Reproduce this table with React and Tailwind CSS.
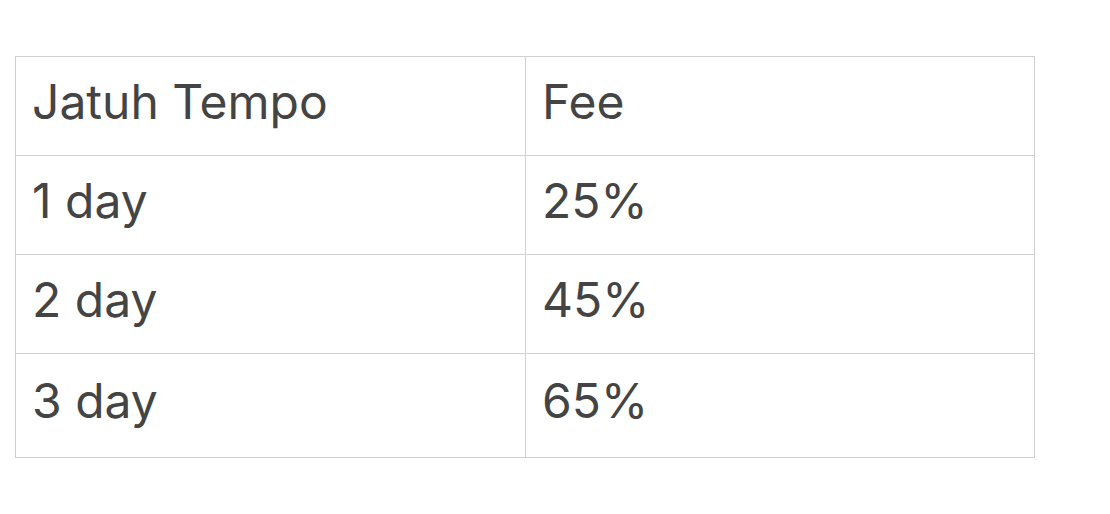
export default function App() {
  const rows = [
    ['1 day', '25%'],
    ['2 day', '45%'],
    ['3 day', '65%'],
  ];
  return (
    <div className="w-[1110px] h-[514px] bg-white pt-[56px] pl-[15px]" style={{ fontFamily: 'Inter, "Open Sans", sans-serif' }}>
      <table className="border-collapse w-[1020px] text-[#444444] text-[48px]">
        <thead>
          <tr className="h-[99px]">
            <th className="border border-[#d0d0d0] w-[510px] text-left font-normal pl-[16px] pb-[9px]">Jatuh Tempo</th>
            <th className="border border-[#d0d0d0] text-left font-normal pl-[16px] pb-[9px]">Fee</th>
          </tr>
        </thead>
        <tbody>
          {rows.map(([d, f], i) => (
            <tr key={d} className={i === rows.length - 1 ? 'h-[104px]' : 'h-[99px]'}>
              <td className="border border-[#d0d0d0] pl-[16px] pb-[9px]">{d}</td>
              <td className="border border-[#d0d0d0] pl-[16px] pb-[9px]">{f}</td>
            </tr>
          ))}
        </tbody>
      </table>
    </div>
  );
}
